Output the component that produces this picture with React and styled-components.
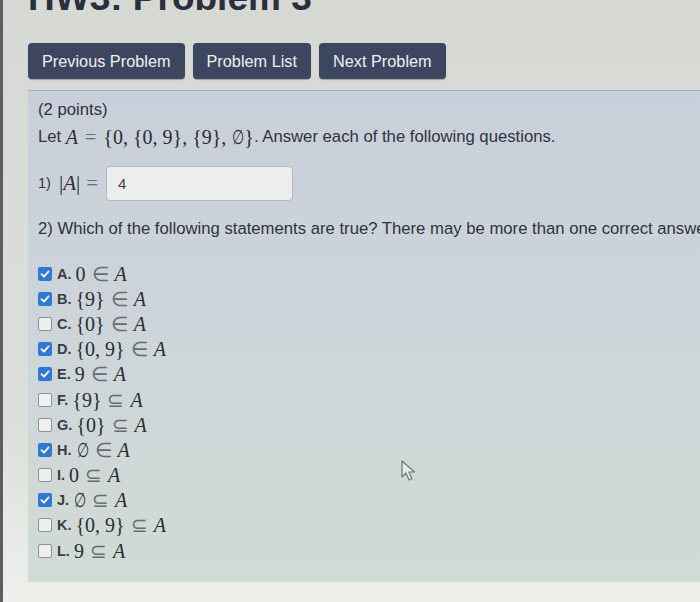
import React from "react";
import styled, { createGlobalStyle } from "styled-components";

const Global = createGlobalStyle`
  html, body { margin: 0; padding: 0; }
  body {
    overflow: hidden;
    background: #d8dad5;
    font-family: "Liberation Sans", Arial, sans-serif;
    color: #2f3138;
  }
`;

const Page = styled.div`
  min-height: 602px;
  border-left: 3px solid #5c5e5c;
  padding-left: 25px;
  background: linear-gradient(180deg, #d6d8d4 0%, #dcdfd9 70%, #eef0eb 100%);
  overflow: hidden;
`;

const Title = styled.h1`
  margin: -21px 0 0;
  font-size: 37px;
  line-height: 37px;
  font-weight: bold;
  color: #2b2f3b;
  white-space: nowrap;
`;

const NavRow = styled.div`
  display: flex;
  gap: 8px;
  margin-top: 27px;
`;

const NavButton = styled.button`
  height: 36px;
  padding: 0 14px;
  border: none;
  border-radius: 4px;
  background: #3c475f;
  color: #edf0f5;
  font-family: "Liberation Sans", Arial, sans-serif;
  font-size: 16.3px;
  box-shadow: 0 1px 1px rgba(0, 0, 0, 0.25);
`;

const Panel = styled.div`
  position: relative;
  margin-top: 11px;
  width: 720px;
  height: 492px;
  box-sizing: border-box;
  padding: 9px 0 0 10px;
  border-top: 1px solid #a6adb8;
  background: linear-gradient(180deg, #c8cfda 0%, #ccd4da 40%, #d1dbd4 100%);
  font-size: 16.7px;
  color: #30333b;
`;

const Line = styled.div`
  line-height: ${(p) => p.$lh || 20}px;
  margin-top: ${(p) => p.$mt || 0}px;
  white-space: nowrap;
  display: flex;
  align-items: center;
`;

const M = styled.span`
  font-family: "Liberation Serif", "Times New Roman", serif;
  font-size: ${(p) => p.$size || 20}px;
  color: #2a2c33;
  white-space: nowrap;
`;

const I = styled.span`
  font-style: italic;
`;

const Op = styled.span`
  color: #686b72;
  margin: 0 ${(p) => p.$sp ?? 5}px;
`;

const Empty = styled.span`
  display: inline-block;
  transform: scaleX(0.7);
  margin: 0 -2px;
`;

const Small = styled.span`
  font-size: 14.5px;
  margin-right: 8px;
`;

const AnswerBox = styled.div`
  width: 187px;
  height: 35px;
  box-sizing: border-box;
  margin-left: 2px;
  padding-left: 11px;
  border: 1px solid #b5b9bd;
  border-radius: 4px;
  background: #eceeeb;
  display: flex;
  align-items: center;
  font-size: 15px;
  color: #444;
`;

const List = styled.div`
  margin-top: 20px;
  display: flex;
  flex-direction: column;
`;

const Row = styled.div`
  height: 25.2px;
  display: flex;
  align-items: center;
  white-space: nowrap;
`;

const Box = styled.span`
  width: 14px;
  height: 14px;
  box-sizing: border-box;
  border-radius: 2px;
  margin-right: 5px;
  display: flex;
  align-items: center;
  justify-content: center;
  background: ${(p) => (p.$on ? "#2d7ad6" : "#eef0ee")};
  border: ${(p) => (p.$on ? "none" : "1px solid #8d9094")};
`;

const Letter = styled.span`
  font-weight: bold;
  font-size: 14.5px;
  color: #3a3d45;
  margin-right: 4px;
`;

const Cursor = styled.svg`
  position: absolute;
  left: 373px;
  top: 369px;
`;

const E = "∈";
const S = "⊆";
const Z = "∅";

const items = [
  ["A", true, ["0", E]],
  ["B", true, ["{9}", E]],
  ["C", false, ["{0}", E]],
  ["D", true, ["{0, 9}", E]],
  ["E", true, ["9", E]],
  ["F", false, ["{9}", S]],
  ["G", false, ["{0}", S]],
  ["H", true, [Z, E]],
  ["I", false, ["0", S]],
  ["J", true, [Z, S]],
  ["K", false, ["{0, 9}", S]],
  ["L", false, ["9", S]],
];

function Check({ on }) {
  return (
    <Box $on={on}>
      {on && (
        <svg width="10" height="10" viewBox="0 0 10 10">
          <path d="M1.5 5.2 L4 7.6 L8.6 2.4" fill="none" stroke="#fff" strokeWidth="1.8" strokeLinecap="round" strokeLinejoin="round" />
        </svg>
      )}
    </Box>
  );
}

function Lhs({ v }) {
  return v === Z ? <Empty>{Z}</Empty> : <>{v}</>;
}

export default function App() {
  return (
    <>
      <Global />
      <Page>
        <Title>HW3: Problem 3</Title>
        <NavRow>
          <NavButton>Previous Problem</NavButton>
          <NavButton>Problem List</NavButton>
          <NavButton>Next Problem</NavButton>
        </NavRow>
        <Panel>
          <Line $lh={20}>(2 points)</Line>
          <Line $lh={24} $mt={5}>
            Let&nbsp;
            <M>
              <I>A</I>
              <Op $sp={7}>=</Op>
              {"{0, {0, 9}, {9}, "}
              <Empty>{Z}</Empty>
              {"}"}
            </M>
            . Answer each of the following questions.
          </Line>
          <Line $lh={35} $mt={17}>
            <Small>1)</Small>
            <M $size={21}>
              |<I>A</I>|<Op $sp={6}>=</Op>
            </M>
            <AnswerBox>4</AnswerBox>
          </Line>
          <Line $lh={24} $mt={16}>
            2) Which of the following statements are true? There may be more than one correct answer.
          </Line>
          <List>
            {items.map(([l, on, [lhs, op]]) => (
              <Row key={l}>
                <Check on={on} />
                <Letter>{l}.</Letter>
                <M>
                  <Lhs v={lhs} />
                  <Op $sp={6}>{op}</Op>
                  <I>A</I>
                </M>
              </Row>
            ))}
          </List>
          <Cursor width="16" height="22" viewBox="0 0 16 22">
            <path d="M1 1 L1 17 L5 13 L8 20 L11 19 L8 12 L13.5 12 Z" fill="#e4ebe4" stroke="#6f786f" strokeWidth="1.2" strokeLinejoin="round" />
          </Cursor>
        </Panel>
      </Page>
    </>
  );
}
